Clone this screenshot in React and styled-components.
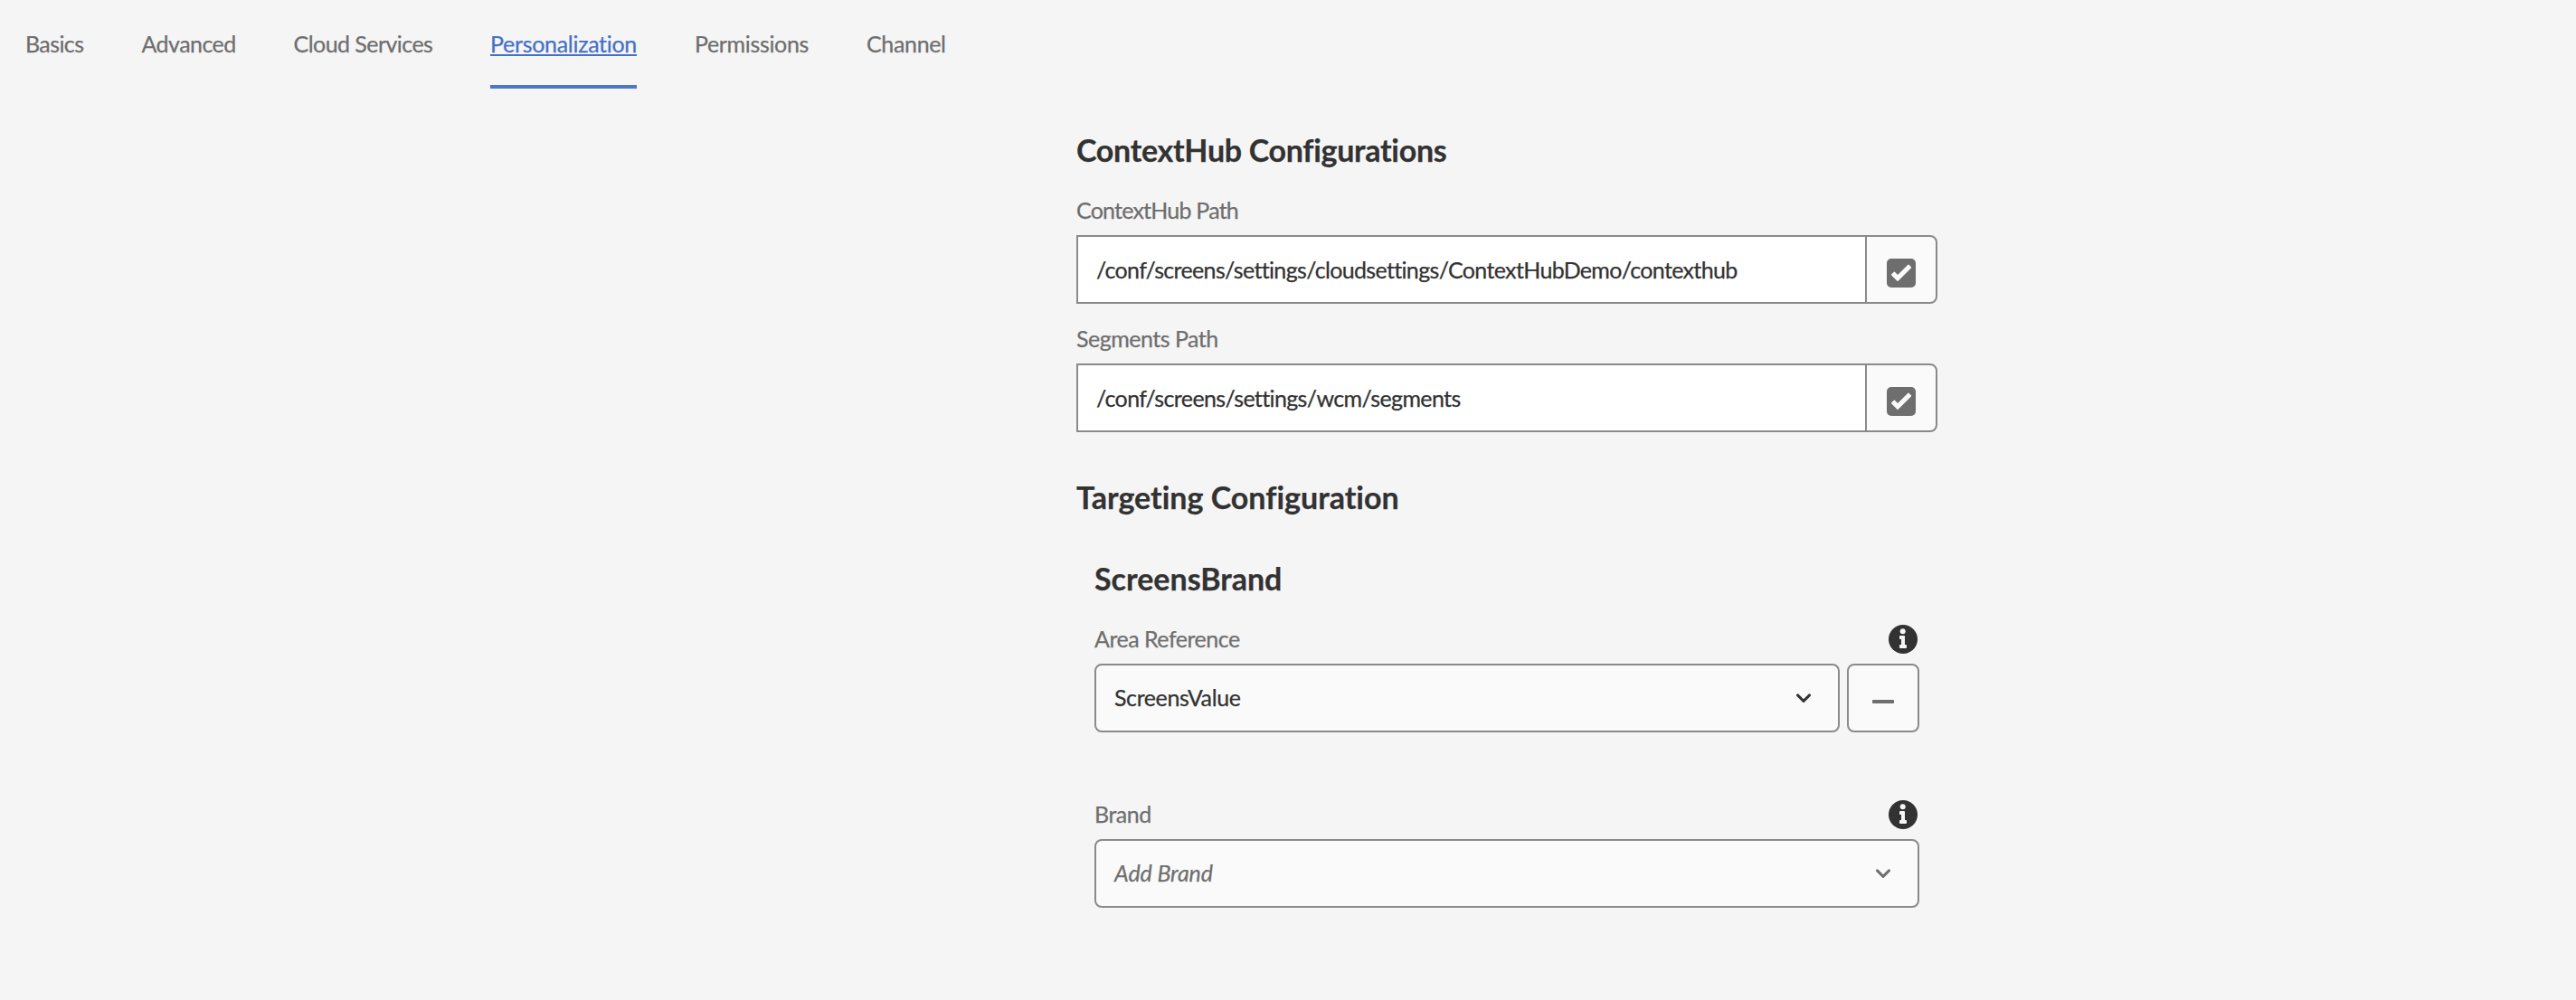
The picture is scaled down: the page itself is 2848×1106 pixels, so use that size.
import React from 'react';
import styled, { createGlobalStyle, css } from 'styled-components';

const GlobalStyle = createGlobalStyle`
  *, *::before, *::after { box-sizing: border-box; }
  body {
    margin: 0;
    background: #f5f5f5;
    color: #323232;
    font-family: Lato, 'Open Sans', sans-serif;
    font-size: 25px;
    line-height: 30px;
    font-variant-ligatures: none;
    -webkit-text-stroke: 0.25px currentColor;
  }
`;

const Page = styled.div`
  min-height: 1106px;
`;

const TabList = styled.nav`
  display: flex;
  gap: 64px;
  height: 98px;
  padding: 33px 28px 0;
`;

const Tab = styled.a`
  flex: none;
  width: ${({ $width }) => $width}px;
  letter-spacing: ${({ $tracking }) => $tracking || 0}px;
  white-space: nowrap;
  color: #6e6e6e;
  ${({ $selected }) =>
    $selected &&
    css`
      color: #4570c6;
      border-bottom: 4px solid #4c76c8;
      text-decoration: underline;
      text-decoration-thickness: 2px;
      text-underline-offset: 2px;
      text-decoration-skip-ink: none;
    `}
`;

const Form = styled.main`
  display: flex;
  flex-direction: column;
  width: 952px;
  margin: 48px 0 0 1190px;
`;

const Heading = styled.h2`
  margin: 0;
  font-size: 34px;
  line-height: 40px;
  font-weight: 700;
  white-space: nowrap;
  letter-spacing: ${({ $tracking }) => $tracking || 0}px;
`;

const Group = styled.section`
  display: flex;
  flex-direction: column;
  gap: ${({ $gap }) => $gap}px;
  padding: ${({ $top }) => $top}px ${({ $inset }) => $inset || 0}px 0;
`;

const Field = styled.div`
  display: flex;
  flex-direction: column;
  gap: 12px;
`;

const LabelRow = styled.div`
  display: flex;
  align-items: center;
  justify-content: space-between;
  height: 30px;
  padding-right: 2px;
`;

const Label = styled.label`
  padding-bottom: 2px;
  color: #6e6e6e;
  letter-spacing: ${({ $tracking }) => $tracking || 0}px;
`;

const Controls = styled.div`
  display: flex;
  gap: ${({ $gap }) => $gap || 0}px;
  height: 76px;
`;

const PathInput = styled.div`
  flex: 1;
  display: flex;
  align-items: center;
  padding: 0 20px;
  background: #fff;
  border: 2px solid #8a8a8a;
  border-right: 0;
  letter-spacing: ${({ $tracking }) => $tracking || 0}px;
`;

const IconButton = styled.button`
  display: flex;
  align-items: center;
  justify-content: center;
  width: 80px;
  padding: 8px 0 0;
  background: #fafafa;
  border: 2px solid #8a8a8a;
  border-radius: ${({ $attached }) => ($attached ? '0 8px 8px 0' : '8px')};
`;

const Select = styled.button`
  flex: 1;
  display: flex;
  align-items: center;
  justify-content: space-between;
  padding: 0 30px 0 20px;
  background: #fafafa;
  border: 2px solid #8a8a8a;
  border-radius: 8px;
  font: inherit;
  color: ${({ $empty }) => ($empty ? '#6e6e6e' : '#323232')};
  font-style: ${({ $empty }) => ($empty ? 'italic' : 'normal')};
  letter-spacing: ${({ $tracking }) => $tracking || 0}px;
`;

const SelectValue = styled.span`
  padding-bottom: 2px;
`;

const Icon = styled.svg`
  display: block;
  flex: none;
`;

const CheckBoxIcon = () => (
  <Icon width="32" height="32" viewBox="0 0 32 32">
    <rect width="32" height="32" rx="5" fill="#6e6e6e" />
    <path d="M5.2 17.3l2.6-2.6a.8.8 0 0 1 1.1 0l3.2 3.4L23.4 6.8a.8.8 0 0 1 1.1 0l2.4 2.5a.8.8 0 0 1 0 1.1L12.6 24.7a.8.8 0 0 1-1.1 0l-6.3-6.3a.8.8 0 0 1 0-1.1z" fill="#fafafa" />
  </Icon>
);

const InfoIcon = () => (
  <Icon width="32" height="32" viewBox="0 0 32 32">
    <circle cx="16" cy="16" r="16" fill="#323232" />
    <circle cx="15.7" cy="7.2" r="3" fill="#f5f5f5" />
    <path
      d="M12.9 12h4.2a.9.9 0 0 1 .9.9V22h1.1a.9.9 0 0 1 .9.9v2.2a.9.9 0 0 1-.9.9h-6.2a.9.9 0 0 1-.9-.9v-2.2a.9.9 0 0 1 .9-.9H14v-6h-1.1a.9.9 0 0 1-.9-.9v-2.2a.9.9 0 0 1 .9-.9z"
      fill="#f5f5f5"
    />
  </Icon>
);

const ChevronIcon = () => (
  <Icon width="16" height="11" viewBox="0 0 16 11">
    <path d="M1.5 1.9L8 8.4l6.5-6.5" fill="none" stroke="currentColor" strokeWidth="2.9" strokeLinecap="round" strokeLinejoin="round" />
  </Icon>
);

const MinusIcon = () => (
  <Icon width="24" height="4" viewBox="0 0 24 4">
    <rect width="24" height="4" rx="0.8" fill="#6e6e6e" />
  </Icon>
);

const tabs = [
  { name: 'Basics', width: 64.5, tracking: -0.6 },
  { name: 'Advanced', width: 104, tracking: -0.55 },
  { name: 'Cloud Services', width: 153.5, tracking: -0.55 },
  { name: 'Personalization', width: 162, tracking: -0.3, selected: true },
  { name: 'Permissions', width: 126, tracking: -0.35 },
  { name: 'Channel', width: 88, tracking: -0.35 },
];

const PathField = ({ label, value, labelTracking, tracking }) => (
  <Field>
    <LabelRow>
      <Label $tracking={labelTracking}>{label}</Label>
    </LabelRow>
    <Controls>
      <PathInput $tracking={tracking}>{value}</PathInput>
      <IconButton $attached aria-label="Select path">
        <CheckBoxIcon />
      </IconButton>
    </Controls>
  </Field>
);

export default function App() {
  return (
    <Page>
      <GlobalStyle />
      <TabList>
        {tabs.map((tab) => (
          <Tab key={tab.name} $width={tab.width} $tracking={tab.tracking} $selected={tab.selected}>
            {tab.name}
          </Tab>
        ))}
      </TabList>
      <Form>
        <Heading $tracking={-0.3}>ContextHub Configurations</Heading>
        <Group $top={32} $gap={24}>
          <PathField
            label="ContextHub Path"
            labelTracking={-0.78}
            value="/conf/screens/settings/cloudsettings/ContextHubDemo/contexthub"
            tracking={-0.66}
          />
          <PathField
            label="Segments Path"
            labelTracking={-0.5}
            value="/conf/screens/settings/wcm/segments"
            tracking={-0.63}
          />
        </Group>
        <Group $top={52}>
          <Heading>Targeting Configuration</Heading>
        </Group>
        <Group $top={50} $inset={20} $gap={32}>
          <Heading>ScreensBrand</Heading>
          <Field>
            <LabelRow>
              <Label $tracking={-0.5}>Area Reference</Label>
              <InfoIcon />
            </LabelRow>
            <Controls $gap={8}>
              <Select $tracking={-0.4}>
                <SelectValue>ScreensValue</SelectValue>
                <ChevronIcon />
              </Select>
              <IconButton aria-label="Remove">
                <MinusIcon />
              </IconButton>
            </Controls>
          </Field>
        </Group>
        <Group $top={76} $inset={20}>
          <Field>
            <LabelRow>
              <Label $tracking={-0.5}>Brand</Label>
              <InfoIcon />
            </LabelRow>
            <Controls>
              <Select $empty $tracking={-0.1}>
                <SelectValue>Add Brand</SelectValue>
                <ChevronIcon />
              </Select>
            </Controls>
          </Field>
        </Group>
      </Form>
    </Page>
  );
}
